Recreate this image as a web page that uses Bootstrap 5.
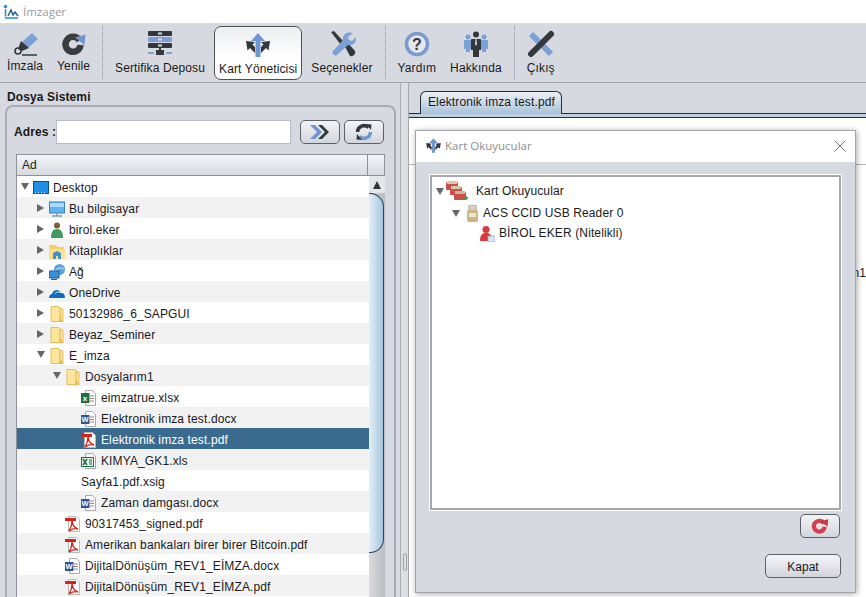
<!DOCTYPE html>
<html lang="tr">
<head>
  <meta charset="UTF-8">
  <meta name="viewport" content="width=device-width, initial-scale=1.0">
  <title>İmzager</title>
  <link href="https://cdn.jsdelivr.net/npm/bootstrap@5.3.0/dist/css/bootstrap.min.css" rel="stylesheet">
  <style>
    :root {
      --app-bg: #d6d9e0;
      --app-line: #a3a6ac;
      --app-dark: #33383d;
      --app-blue: #6f96cf;
    }
    html, body { height: 597px; overflow: hidden; }
    body {
      background: #fff;
      color: #1a1a1a;
      font: 12px/1.2 "Liberation Sans", Arial, sans-serif;
      letter-spacing: .12px;
      position: relative;
    }
    .win-title { height: 23px; padding-left: 3px; color: #9a9a9a; font: 11.5px "Open Sans", sans-serif; letter-spacing: 0; }
    .win-title span { margin-left: 4px; }

    .toolbar { height: 60px; background: var(--app-bg); border-bottom: 1px solid var(--app-line); padding: 2px 0 0 0; }
    .tool-item { padding: 5px 7px 0; height: 54px; text-align: center; white-space: nowrap; }
    .tool-item svg { display: block; margin: 0 auto 3px; width: 28px; height: 28px; }
    .tool-item.tool-raised svg { margin-bottom: 1px; }
    .tool-active { background: linear-gradient(#eceef1, #fdfdfd 55%, #fff); border: 1px solid #4d5056; border-radius: 7px; margin: 1px 2px 0; padding: 4px 4px 0; }
    .tool-sep { border-left: 1px dotted #8c8f95; height: 53px; margin: 1px 5px 0; }

    .workspace { height: 514px; background: var(--app-bg); }
    .left-pane { width: 401px; padding: 7px 0 0 5px; border-right: 1px solid #a9acb2; flex: none; }
    .pane-title { font-weight: 700; height: 15px; padding-left: 2px; }
    .pane-box { border: 2px solid #a9acb2; border-bottom: 0; border-radius: 8px 8px 0 0; width: 391px; height: 500px; padding: 13px 10px 0 9px; }
    .addr-row { margin-left: -2px; }
    .addr-label { font-weight: 700; width: 42px; flex: none; white-space: nowrap; }
    .addr-input { width: 235px; height: 24px; border: 1px solid #b9bcc2; border-radius: 0; padding: 0 4px; box-shadow: none; flex: none; margin-right: 9px; }
    .tool-btn { width: 40px; height: 24px; padding: 0; background: linear-gradient(#f3f4f6, #d3d6dc); border: 1px solid #5c6068; border-radius: 5px; }
    .tool-btn svg { display: block; margin: 0 auto; }
    .tool-btn-next { margin-left: 4px; }
    .file-table { width: 369px; margin-top: 10px; }
    .file-head { height: 22px; border: 1px solid #8f9298; background: linear-gradient(#f3f5f8, #d7dae0); padding-left: 5px; }
    .file-head-end { width: 17px; height: 100%; border-left: 1px solid #8f9298; }
    .tree-col { width: 353px; background: #fff; border-left: 1px solid #8f9298; height: 421px; }
    .tree-row { height: 21px; padding-top: 3px; white-space: nowrap; }
    .tree-row:nth-child(even) { background: #f2f2f2; }
    .tree-row.row-picked { background: #3b6a8f; color: #fff; }
    .tree-row svg.tree-icon { width: 16px; height: 16px; margin-right: 4px; flex: none; }
    .indent-0 { padding-left: 4px; }
    .indent-1 { padding-left: 20px; }
    .indent-2 { padding-left: 36px; }
    .indent-3 { padding-left: 52px; }
    .arrow-slot { width: 12px; flex: none; }
    .tree-row .arrow-slot { margin-top: -3px; }
    .arrow-open { display: block; width: 0; height: 0; border-left: 4px solid transparent; border-right: 4px solid transparent; border-top: 7px solid #666; }
    .arrow-shut { display: block; width: 0; height: 0; border-top: 4px solid transparent; border-bottom: 4px solid transparent; border-left: 7px solid #666; }
    .scroll-col { width: 16px; background: linear-gradient(90deg, #d9dbe0, #b9bcc3); }
    .scroll-up { height: 17px; background: #e4e6ea; }
    .scroll-up i { display: block; width: 0; height: 0; border-left: 4px solid transparent; border-right: 4px solid transparent; border-bottom: 8px solid #333; }
    .scroll-thumb { height: 360px; margin-right: 1px; background: linear-gradient(90deg, #e4eef6, #a6c7e1); border: 1px solid #2d4150; border-left: 0; border-radius: 0 14px 14px 0 / 0 14px 14px 0; }

    .split-bar { width: 8px; border-right: 1px solid #a3a6ac; background: #dcdfe4; flex: none; }
    .split-grip { width: 4px; height: 18px; margin-top: 470px; margin-left: 2px; border: 1px solid #a0a3a9; border-radius: 2px; }
    .right-pane { min-width: 0; }
    .tab-strip { height: 31px; padding: 8px 0 0 11px; }
    .doc-tab { width: 142px; height: 23px; border: 1px solid #23303b; border-bottom: 0; border-radius: 6px 6px 0 0; background: linear-gradient(#eef1f5, #a9c1d8); padding: 3px 0 0 7px; position: relative; z-index: 1; }
    .tab-rail { height: 5px; margin-top: -1px; background: #bcd0e2; border-top: 1px solid #23303b; border-bottom: 1px solid #23303b; }
    .doc-view { background: #fff; height: 479px; }
    .doc-head { height: 47px; border-bottom: 1px solid #b5b5b5; }
    .doc-cut { margin-top: 101px; white-space: nowrap; }

    .dialog-win { position: absolute; left: 415px; top: 130px; width: 441px; height: 463px; background: var(--app-bg); border: 1px solid #a2a5aa; box-shadow: 1px 1px 6px rgba(0,0,0,.35); }
    .dialog-head { height: 31px; background: #fff; padding: 0 9px 2px; color: #8f8f8f; font: 11.5px "Open Sans", sans-serif; letter-spacing: 0; }
    .dialog-head svg.app-mark { width: 17px; height: 17px; margin-right: 3px; }
    .dialog-body { padding: 13px 14px 0; }
    .reader-tree { height: 335px; background: #fff; border: 2px solid #a6a8ad; outline: 1px solid #fff; padding-top: 3px; }
    .reader-row { white-space: nowrap; }
    .reader-top { height: 22px; }
    .reader-top .arrow-slot { width: 10px; }
    .reader-mid { height: 23px; padding-left: 20px; }
    .reader-mid .arrow-slot { width: 14px; }
    .reader-mid svg { margin-right: 4px; }
    .reader-low { height: 17px; padding-left: 47px; }
    .refresh-row { margin: 4px 1px 0 0; }
    .closing-row { margin-top: 16px; }
    .plain-btn { font: inherit; color: #1a1a1a; width: 76px; height: 24px; padding: 2px 0 0; background: linear-gradient(#f5f6f8, #d2d5db); border: 1px solid #5c6068; border-radius: 5px; }
  </style>
</head>
<body>
  <svg width="0" height="0" class="position-absolute">
    <symbol id="i-arrows" viewBox="0 0 28 28"><path d="M14 2l7 8h-4.500v16h-5V10H7z" fill="#6f96cf"/><path d="M2 10l9 1-2.500 2.500 2.500 2.500v6l-5-5-2.500 2.500zM26 10l-9 1 2.500 2.500-2.500 2.500v6l5-5 2.500 2.500z" fill="#33383d"/></symbol>
  </svg>

  <div class="win-title d-flex align-items-center">
    <svg width="16" height="16" viewBox="0 0 16 16"><circle cx="2.500" cy="2.500" r="1.700" fill="#2a8ccf"/><path d="M2.500 5v7.500M2 14h13" stroke="#2a8ccf" stroke-width="1.500" fill="none"/><path d="M5 12l3-6 2 5 2-3 3 4" stroke="#1d5f8f" stroke-width="1.500" fill="none"/></svg>
    <span>İmzager</span>
  </div>

  <div class="toolbar d-flex">
    <div class="tool-item tool-raised">
      <svg viewBox="0 0 28 28"><path d="M11 12L21 3l6 6-10 9z" fill="#7ba1d6"/><path d="M7 19l3-8 8 7-7 3z" fill="#33383d"/><circle cx="7" cy="21" r="3" fill="none" stroke="#33383d" stroke-width="1.600"/><path d="M11 25h15" stroke="#33383d" stroke-width="1.500"/></svg>
      İmzala
    </div>
    <div class="tool-item tool-raised">
      <svg viewBox="0 0 28 28"><path d="M19.500 10.500A7.500 7.500 0 1 0 20.500 15" fill="none" stroke="#3a3d40" stroke-width="6.500"/><path d="M15 7.500L25.500 4.500 24.500 15z" fill="#6f96cf"/></svg>
      Yenile
    </div>
    <div class="tool-sep"></div>
    <div class="tool-item">
      <svg viewBox="0 0 28 28"><rect x="2" y="1" width="24" height="5" rx="1" fill="#33383d"/><rect x="2" y="7" width="24" height="5" rx="1" fill="#7b9fd6"/><rect x="2" y="13" width="24" height="5" rx="1" fill="#33383d"/><rect x="12" y="2.500" width="4" height="2" fill="#d6d9e0"/><rect x="12" y="8.500" width="4" height="2" fill="#d6d9e0"/><rect x="12" y="14.500" width="4" height="2" fill="#d6d9e0"/><path d="M14 18v3" stroke="#33383d" stroke-width="2"/><rect x="10" y="20" width="8" height="5" fill="#33383d"/><path d="M2 23h6M20 23h6" stroke="#7b9fd6" stroke-width="2"/></svg>
      Sertifika Deposu
    </div>
    <div class="tool-item tool-active">
      <svg viewBox="0 0 28 28"><use href="#i-arrows"/></svg>
      Kart Yöneticisi
    </div>
    <div class="tool-item">
      <svg viewBox="0 0 28 28"><path d="M3 2l3-1 10 11-3 3z" fill="#33383d"/><path d="M16 15l3-3 8 9c1 3-2 6-5 5z" fill="#33383d"/><path d="M25 3l-5 4 1 3 3 1 4-4c1 5-3 9-8 8L9 25c-2 2-6-2-4-4L15 10c-1-5 4-9 10-7z" fill="#7ba1d6"/></svg>
      Seçenekler
    </div>
    <div class="tool-sep"></div>
    <div class="tool-item">
      <svg viewBox="0 0 28 28"><circle cx="14" cy="14" r="10.500" fill="#e3e6ec" stroke="#7b9ad0" stroke-width="3.500"/><text x="14" y="20" text-anchor="middle" font-size="16" font-weight="700" fill="#33383d" font-family="Liberation Sans">?</text></svg>
      Yardım
    </div>
    <div class="tool-item">
      <svg viewBox="0 0 28 28"><circle cx="6" cy="7" r="2.500" fill="#7ba1d6"/><circle cx="22" cy="7" r="2.500" fill="#7ba1d6"/><path d="M2 10h8v9H8v3H4v-3H2zM18 10h8v9h-2v3h-4v-3h-2z" fill="#7ba1d6"/><circle cx="14" cy="4.500" r="3" fill="#33383d"/><path d="M9 9h10v11h-2v7h-6v-7H9z" fill="#33383d"/><path d="M13.500 9h1l.5 5-1 2-1-2z" fill="#d6d9e0"/></svg>
      Hakkında
    </div>
    <div class="tool-sep"></div>
    <div class="tool-item">
      <svg viewBox="0 0 28 28"><path d="M4 4l20 20" stroke="#7ba1d6" stroke-width="6"/><path d="M4 24L24 4" stroke="#33383d" stroke-width="6" stroke-linecap="round"/></svg>
      Çıkış
    </div>
  </div>

  <div class="workspace d-flex">
    <div class="left-pane">
      <div class="pane-title">Dosya Sistemi</div>
      <div class="pane-box">
        <div class="d-flex align-items-center addr-row">
          <div class="addr-label">Adres :</div>
          <input type="text" class="form-control addr-input">
          <button class="btn tool-btn" type="button"><svg width="26" height="18" viewBox="0 0 26 18"><path d="M3 2h5l7 7-7 7H3l7-7z" fill="#6f96cf"/><path d="M11 2h4l7 7-7 7h-4l7-7z" fill="#33383d"/></svg></button>
          <button class="btn tool-btn tool-btn-next" type="button"><svg width="20" height="20" viewBox="0 0 20 20"><path d="M3.500 10a6.500 6.500 0 0 1 11-4.500" fill="none" stroke="#33383d" stroke-width="3.500"/><path d="M16.500 10a6.500 6.500 0 0 1-11 4.500" fill="none" stroke="#6f96cf" stroke-width="3.500"/><path d="M12 2l5.500.5L17 8zM8 18l-5.500-.5L3 12z" fill="#33383d"/></svg></button>
        </div>
        <div class="file-table">
          <div class="file-head d-flex align-items-center justify-content-between"><span>Ad</span><span class="file-head-end"></span></div>
          <div class="d-flex">
            <div class="tree-col" id="file-tree"></div>
            <div class="scroll-col">
              <div class="scroll-up d-flex align-items-center justify-content-center"><i></i></div>
              <div class="scroll-thumb"></div>
            </div>
          </div>
        </div>
      </div>
    </div>
    <div class="split-bar"><div class="split-grip"></div></div>
    <div class="right-pane flex-fill">
      <div class="tab-strip"><div class="doc-tab">Elektronik imza test.pdf</div></div>
      <div class="tab-rail"></div>
      <div class="doc-view">
        <div class="doc-head"></div>
        <div class="doc-cut text-end">n1</div>
      </div>
    </div>
  </div>

  <div class="dialog-win">
    <div class="dialog-head d-flex align-items-center">
      <svg class="app-mark" viewBox="0 0 28 28"><use href="#i-arrows"/></svg>
      <span class="flex-fill">Kart Okuyucular</span>
      <svg width="12" height="12" viewBox="0 0 12 12"><path d="M.5.5l11 11M11.500.5l-11 11" stroke="#777" fill="none"/></svg>
    </div>
    <div class="dialog-body">
      <div class="reader-tree">
        <div class="reader-row d-flex align-items-center ps-1 reader-top">
          <span class="arrow-slot"><i class="arrow-open"></i></span>
          <svg width="22" height="20" viewBox="0 0 22 20" class="me-2"><rect x="0" y="1" width="12" height="8" rx="1" fill="#c8504e"/><rect x="1" y="0" width="10" height="3" fill="#e2c6a8"/><rect x="4" y="6" width="12" height="8" rx="1" fill="#c8504e"/><rect x="5" y="5" width="10" height="3" fill="#e2c6a8"/><rect x="8" y="11" width="12" height="8" rx="1" fill="#c8504e"/><rect x="9" y="10" width="10" height="3" fill="#cbb592"/><path d="M18 17h4M20 15v4" stroke="#3a9a4a" stroke-width="1.500"/></svg>
          Kart Okuyucular
        </div>
        <div class="reader-row d-flex align-items-center reader-mid">
          <span class="arrow-slot"><i class="arrow-open"></i></span>
          <svg width="13" height="17" viewBox="0 0 13 17"><rect x="3" y="0" width="7" height="6" fill="#d9d4c8" stroke="#a89f8b"/><rect x="1" y="5" width="11" height="12" rx="2" fill="#cdb685"/><rect x="3" y="8" width="7" height="4" fill="#f0e6cc"/></svg>
          ACS CCID USB Reader 0
        </div>
        <div class="reader-row d-flex align-items-center reader-low">
          <svg width="16" height="16" viewBox="0 0 16 16" class="me-1"><circle cx="7" cy="3.500" r="3.500" fill="#d83a3f"/><path d="M1 15c0-6 2-8 6-8s5 2 5 3H9v5z" fill="#d83a3f"/><rect x="9" y="10" width="7" height="6" fill="#dfe6ee" stroke="#8fa5bb" stroke-width=".8"/></svg>
          BİROL EKER (Nitelikli)
        </div>
      </div>
      <div class="d-flex justify-content-end refresh-row"><button class="btn tool-btn" type="button"><svg width="20" height="20" viewBox="0 0 28 28"><path d="M19.500 10.500A7.500 7.500 0 1 0 20.500 15" fill="none" stroke="#d1414f" stroke-width="6"/><path d="M15 7.500L25.500 4.500 24.500 15z" fill="#c9353f"/></svg></button></div>
      <div class="d-flex justify-content-end closing-row"><button class="btn plain-btn" type="button">Kapat</button></div>
    </div>
  </div>

  <script>
    // tree rows: [level, arrow, icon, label, selected]
    const rows = [
      [0, 'open', 'desktop', 'Desktop'],
      [1, 'shut', 'pc', 'Bu bilgisayar'],
      [1, 'shut', 'user', 'birol.eker'],
      [1, 'shut', 'lib', 'Kitaplıklar'],
      [1, 'shut', 'net', 'Ağ'],
      [1, 'shut', 'cloud', 'OneDrive'],
      [1, 'shut', 'folder', '50132986_6_SAPGUI'],
      [1, 'shut', 'folder', 'Beyaz_Seminer'],
      [1, 'open', 'folder', 'E_imza'],
      [2, 'open', 'folder', 'Dosyalarım1'],
      [3, '', 'xlsx', 'eimzatrue.xlsx'],
      [3, '', 'word', 'Elektronik imza test.docx'],
      [3, '', 'pdf', 'Elektronik imza test.pdf', true],
      [3, '', 'xls', 'KIMYA_GK1.xls'],
      [3, '', '', 'Sayfa1.pdf.xsig'],
      [3, '', 'word', 'Zaman damgası.docx'],
      [2, '', 'pdf', '90317453_signed.pdf'],
      [2, '', 'pdf', 'Amerikan bankaları birer birer Bitcoin.pdf'],
      [2, '', 'word', 'DijitalDönüşüm_REV1_EİMZA.docx'],
      [2, '', 'pdf', 'DijitalDönüşüm_REV1_EİMZA.pdf'],
      [2, '', '', '']
    ];
    const icons = {
      desktop: '<rect x=".5" y="1.500" width="15" height="12" fill="#1e8fe6" stroke="#0d4f8f"/><path d="M2 13h12" stroke="#fff" stroke-dasharray="1 2"/>',
      pc: '<rect x=".5" y="1" width="15" height="11" fill="#5db4ee" stroke="#3f7fb5"/><rect x="1" y="2" width="14" height="4" fill="#a8dcfa"/><path d="M3 15h10M8 12v3" stroke="#7d9cb7" stroke-width="1.500"/>',
      user: '<circle cx="8" cy="3.500" r="3" fill="#7d5a3c"/><path d="M2 16c0-6 2-9 6-9s6 3 6 9z" fill="#3f9a5c"/>',
      lib: '<path d="M0 2h7l2 2h6v3H0z" fill="#f5cf6d"/><path d="M0 6h16v10H0z" fill="#fbe08e"/><path d="M4 16v-6l4-2 4 2v6h-3v-3H7v3z" fill="#3f93c9"/>',
      net: '<circle cx="10.500" cy="5.500" r="5.500" fill="#5aa2dc"/><path d="M6 7c2-3 6-4 9-2" stroke="#d8ecf9" fill="none"/><rect x="0" y="7" width="10" height="7" fill="#3a8fd8" stroke="#1f5f99"/><path d="M2 15.500h6" stroke="#1f5f99" stroke-width="1.200"/>',
      cloud: '<path d="M0 13c0-3 2-4 3-4 1-4 7-6 9-1 3 0 4 2 4 5z" fill="#0f6cbd"/><path d="M6 9c1-2 4-3 6-1" stroke="#fff" fill="none"/>',
      folder: '<path d="M2 .5h8l1 1v14H2z" fill="#fde59c" stroke="#e0c067"/><path d="M11 2l3 1v12.500h-3z" fill="#fbe08e" stroke="#e0c067"/><path d="M11 11l3 4.500h-3z" fill="#e9b949"/>',
      pdf: '<path d="M3.500.5h8l3 3v12h-11z" fill="#fff" stroke="#b9b9b9"/><path d="M0 2h11v3H0z" fill="#dc1f17"/><path d="M7 5c1 5 2 6 6 8-4-1-6 0-9 2 2-3 3-6 3-10z" fill="none" stroke="#dc1f17" stroke-width="1.300"/>',
      word: '<path d="M4.500.5h7l3 3v12h-10z" fill="#fff" stroke="#a9a9a9"/><path d="M9 6h4M9 8.500h4M9 11h4" stroke="#8a8a8a"/><rect x="0" y="4" width="8.500" height="9" fill="#2b5797"/><text x=".6" y="11" font-size="7.500" font-weight="700" fill="#fff" font-family="Liberation Sans">W</text>',
      xlsx: '<path d="M4.500.5h7l3 3v12h-10z" fill="#fff" stroke="#a9a9a9"/><path d="M9 6h4M9 8.500h4M9 11h4" stroke="#8a8a8a"/><rect x="0" y="3" width="8.500" height="10" fill="#207245"/><text x="1.800" y="11" font-size="8" font-weight="700" fill="#fff" font-family="Liberation Sans">x</text>',
      xls: '<path d="M4.500.5h7l3 3v12h-10z" fill="#fff" stroke="#a9a9a9"/><rect x=".5" y="4.500" width="12" height="9" fill="#e6f3ea" stroke="#207245"/><path d="M2 6l4 6M6 6l-4 6" stroke="#207245" stroke-width="1.500"/><path d="M8 7h3M8 9h3M8 11h3" stroke="#207245"/>'
    };
    const box = document.getElementById('file-tree');
    box.innerHTML = rows.map(r => {
      const slot = r[1] ? `<span class="arrow-slot"><i class="arrow-${r[1]}"></i></span>` : '<span class="arrow-slot"></span>';
      const icon = r[2] ? `<svg class="tree-icon" viewBox="0 0 16 16">${icons[r[2]]}</svg>` : '';
      return `<div class="tree-row d-flex align-items-center indent-${r[0]}${r[4] ? ' row-picked' : ''}">${slot}${icon}<span>${r[3]}</span></div>`;
    }).join('');
  </script>
  <script src="https://cdn.jsdelivr.net/npm/bootstrap@5.3.0/dist/js/bootstrap.bundle.min.js"></script>
</body>
</html>
